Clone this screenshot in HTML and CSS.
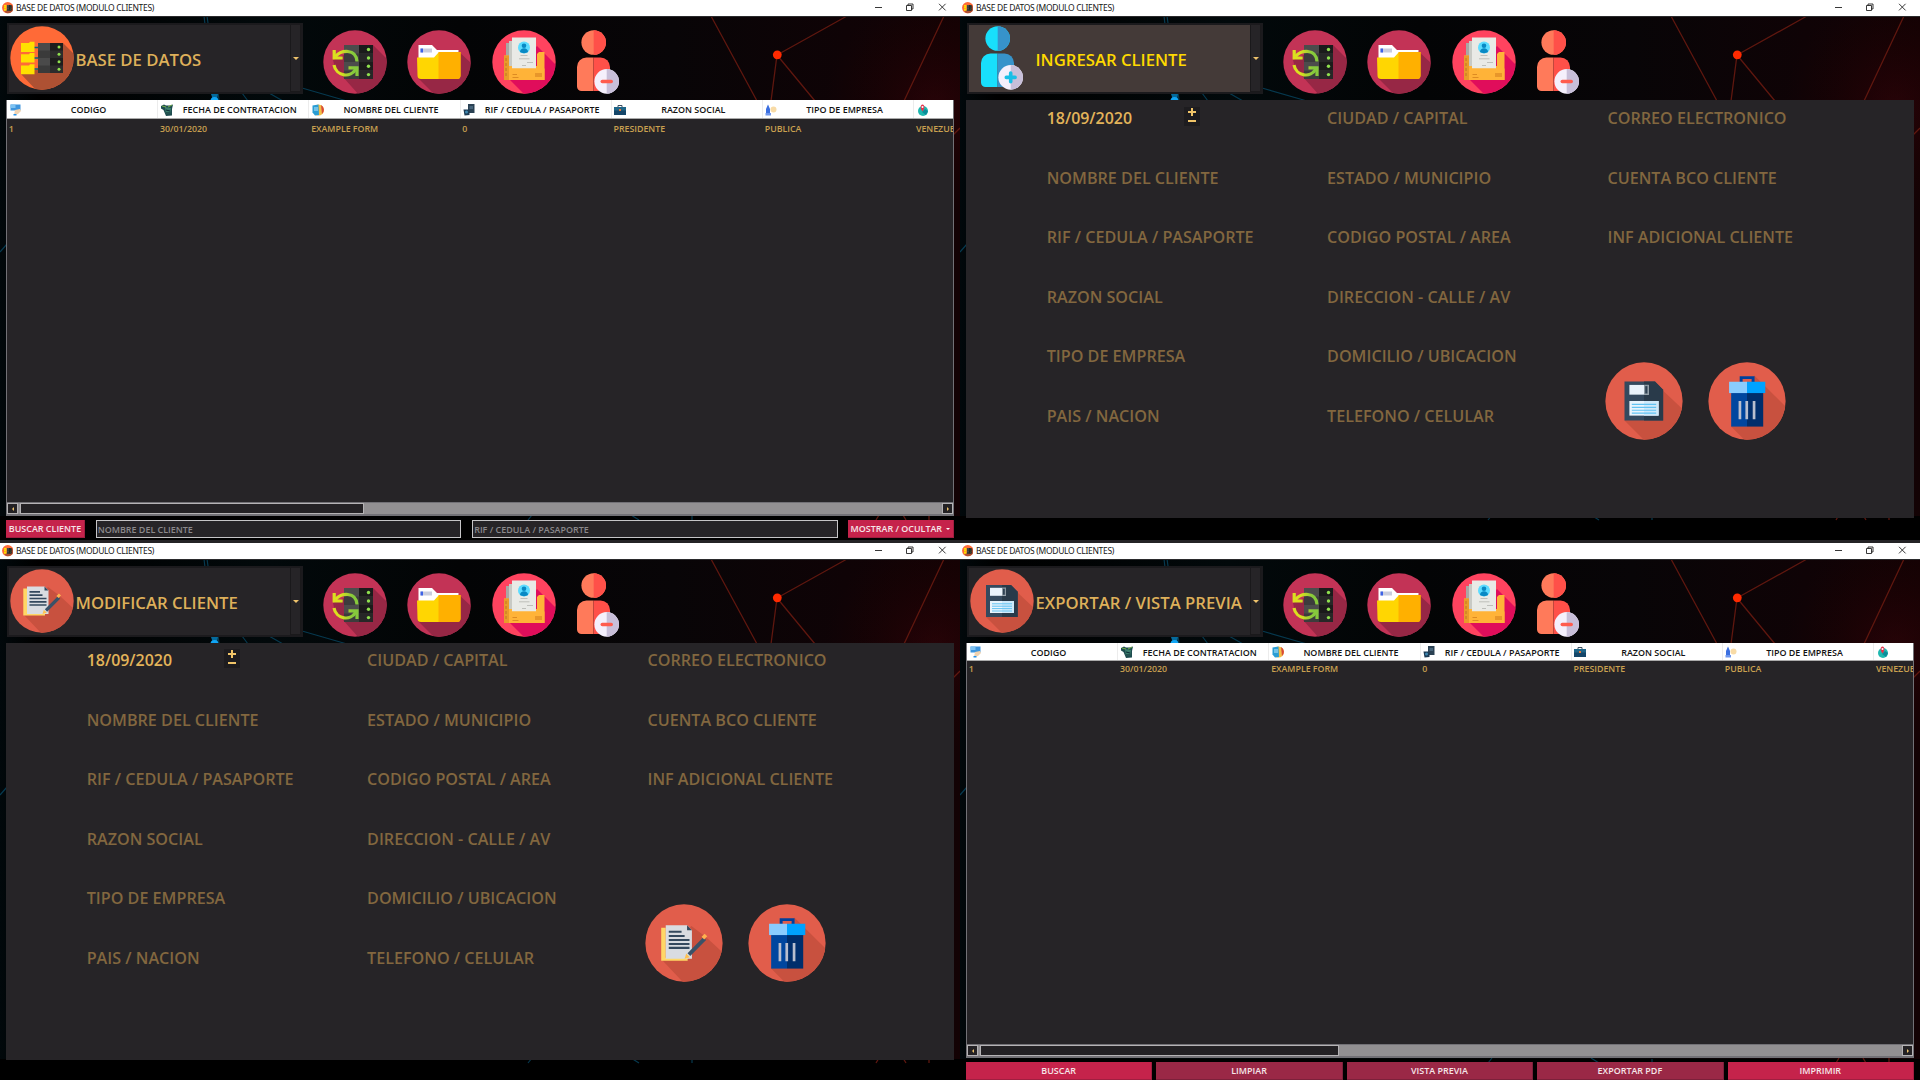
FILE: index.html
```html
<!DOCTYPE html>
<html lang="es">
<head>
<meta charset="utf-8">
<title>BASE DE DATOS (MODULO CLIENTES)</title>
<link rel="stylesheet" href="styles.css">
</head>
<body>
<svg class="defs" aria-hidden="true">
  <defs>
    <linearGradient id="glow" x1="0" x2="1" y1="0" y2="0"><stop offset="0" stop-color="#01080b"/><stop offset=".04" stop-color="#000"/><stop offset=".28" stop-color="#02090b"/><stop offset=".48" stop-color="#030405"/><stop offset=".7" stop-color="#080507"/><stop offset=".88" stop-color="#0f0306"/><stop offset="1" stop-color="#130204"/></linearGradient>
    <radialGradient id="ember" cx="935" cy="105" r="110" gradientUnits="userSpaceOnUse"><stop offset="0" stop-color="#34040a" stop-opacity=".6"/><stop offset="1" stop-color="#200" stop-opacity="0"/></radialGradient>
    <linearGradient id="arrows" x1="10" x2="36" y1="0" y2="0" gradientUnits="userSpaceOnUse"><stop offset=".3" stop-color="#dbe01f"/><stop offset=".75" stop-color="#86c93c"/></linearGradient>
    <clipPath id="disc"><circle cx="32" cy="32" r="31.7"/></clipPath>
  </defs>
  <symbol id="backdrop" viewBox="0 0 960 543">
    <rect width="960" height="543" fill="url(#glow)"/>
    <rect x="780" width="180" height="400" fill="url(#ember)"/>
    <rect y="516" width="960" height="27" fill="#000"/>
    <g fill="none" stroke="#06394f" stroke-width="1.2"><path d="M204 16l10 84M207 16l12 84M242 93l6 8M269 93l14 8M302 88l45 13M0 252l7-8M528 520l4-5M631 515l8 5M692 520v-4"/></g>
    <path d="M211 94l2 6h4l1-6z" fill="#046a9c"/><circle cx="214.5" cy="101" r="4" fill="#11a5f4"/>
    <g fill="none" stroke="#5f170f" stroke-width="1.3"><path d="M711 16l46 85M777 55l70-39M777 55l-6 46M777 55l38 46M944 16l-40 85M953 135l7-7M876 520l3-5M903 515l3 5M929 515v5"/></g>
    <circle cx="777.3" cy="54.8" r="4.4" fill="#ff2a00"/>
  </symbol>
  <symbol id="database" viewBox="0 0 64 64">
    <circle cx="32" cy="32" r="31.7" fill="#ff6a37"/>
    <path clip-path="url(#disc)" d="M11 48l18-5 24-26 12 12v36H27z" fill="#ae5133"/>
    <path d="M24 21.5h5M24 32h5M24 43h5" stroke="#05647f" stroke-width="1.5"/>
    <path d="M11 17h8l1-1.3h4.500V26H11zM11 28.300h8l1-1.300h4.500v9.600H11zM11 39.500h8l1-1.300h4.500v10H11z" fill="#ffe000"/>
    <path d="M28 17h25v30H28z" fill="#1d1d1d"/><path d="M28 17h12v30H28z" fill="#4a4a4a"/><path d="M28 24.500h12v7.500H28zM28 39.500h12V47H28z" fill="#3a3a3a"/><path d="M40 24.500h13v7.500H40zM40 39.500h13V47H40z" fill="#2c2c2c"/>
    <g fill="#8fe04f"><circle cx="49" cy="21" r="1.500"/><circle cx="49" cy="28.200" r="1.500"/><circle cx="49" cy="35.800" r="1.500"/><circle cx="49" cy="43.200" r="1.500"/></g>
  </symbol>
  <symbol id="sync" viewBox="0 0 64 64">
    <circle cx="32" cy="32" r="31.7" fill="#c33356"/>
    <path clip-path="url(#disc)" d="M10 30l11-5 29-10 15 15v35H36L12 38z" fill="#972745"/>
    <path d="M21 15h29v34H21z" fill="#3a3a3a"/><path d="M21 15h15v34H21z" fill="#4c4c4c"/><path d="M36 15h14v8.500H36zM36 32h14v8.500H36z" fill="#1b1b1b"/><path d="M21 23.500h15V32H21zM21 40.500h15V49H21z" fill="#3c3c3c"/><path d="M36 23.500h14V32H36zM36 40.500h14V49H36z" fill="#272727"/>
    <g fill="#8fe04f"><circle cx="45.500" cy="19.500" r="1.700"/><circle cx="45.500" cy="28" r="1.700"/><circle cx="45.500" cy="36.200" r="1.700"/><circle cx="45.500" cy="44.600" r="1.700"/></g>
    <g fill="none" stroke="url(#arrows)" stroke-width="3.200"><path d="M12.500 26.500C18 20 33 18 34 31.500"/><path d="M11.200 20v8h8.500"/><path d="M11 35c2 11 17 14 22 3.500"/><path d="M25.500 37.800H34V46"/></g>
  </symbol>
  <symbol id="folder" viewBox="0 0 64 64">
    <circle cx="32" cy="32" r="31.7" fill="#c33356"/>
    <path clip-path="url(#disc)" d="M11 48l40-27 14 13v31H28z" fill="#972745"/>
    <path d="M11.500 15H25l5 5h21.500v10h-40z" fill="#fff"/><path d="M13.500 18.500H25v4H13.500z" fill="#c9cddd"/><path d="M13.500 18.500h2.500v4h-2.500z" fill="#3d63e6"/>
    <path d="M10 27.500h17l5-5.500h21.500v23.500a3.500 3.500 0 0 1-3.500 3.500H14a3.500 3.500 0 0 1-3.500-3.500z" fill="#ffd602"/><path d="M31.500 22.500l.5-.5h21.500v23.500a3.500 3.500 0 0 1-3.500 3.500H31.500z" fill="#ffb000"/>
  </symbol>
  <symbol id="records" viewBox="0 0 64 64">
    <circle cx="32" cy="32" r="31.7" fill="#ff435f"/>
    <path clip-path="url(#disc)" d="M17 49L45 16l20 20v29H33z" fill="#e00d5b"/>
    <path d="M14 13h5v30h-5z" fill="#a8a8a5"/><path d="M17 11h6v30h-6z" fill="#c8cac5"/>
    <path d="M12 25.500h5V36h28V24l2-2h5.500v28H12z" fill="#ffb338"/><path d="M12 25.500h5V50h-5z" fill="#e99b2a"/><path d="M14 28v19" stroke="#bd7925" stroke-dasharray="3 2"/>
    <path d="M20 7.500h24V38.500H20z" fill="#e9eae6"/><path d="M17 38.500h35.500V50H17z" fill="#ffb338"/>
    <circle cx="32" cy="17.500" r="6" fill="#5cdcff"/><circle cx="32" cy="15.700" r="2.300" fill="#0889c4"/><path d="M28 22c0-5 8-5 8 0-2 1.500-6 1.500-8 0z" fill="#0889c4"/>
    <path d="M28.500 25.500h7M27 28.800h10.500M35 32.500h6M30 35.500h4" stroke="#bebfba" stroke-width="1"/><path d="M20.500 44.500h4.500M20.500 47.500h6" stroke="#dd8b22" stroke-width="1.200"/><path d="M43 43h7v4h-7z" fill="#e8962a"/>
  </symbol>
  <symbol id="user-remove" viewBox="0 0 42 64">
    <circle cx="16.700" cy="12.500" r="12.300" fill="#ff7a5a"/><path d="M16.700.2a12.300 12.300 0 0 1 0 24.600z" fill="#ff5049"/>
    <path d="M0 37a9.500 9.500 0 0 1 9.500-9.500h7V61H4.500A4.500 4.500 0 0 1 0 56.500z" fill="#ff7a5a"/><path d="M16.500 27.500h7A9.500 9.500 0 0 1 33 37v24H16.500z" fill="#ff5049"/>
    <circle cx="29.700" cy="51.400" r="12.300" fill="#f5f0fc"/><path d="M29.700 39.100a12.300 12.300 0 0 1 0 24.600z" fill="#c8bfd9"/><rect x="23.500" y="49.700" width="12.500" height="3.600" rx="1.800" fill="#ff5c4e"/>
  </symbol>
  <symbol id="user-add" viewBox="0 0 42 64">
    <circle cx="16.700" cy="12.500" r="12.300" fill="#18dffc"/><path d="M16.700.2a12.300 12.300 0 0 1 0 24.600z" fill="#3793ca"/>
    <path d="M0 37a9.500 9.500 0 0 1 9.500-9.500h7V61H4.500A4.500 4.500 0 0 1 0 56.500z" fill="#18dffc"/><path d="M16.500 27.500h7A9.500 9.500 0 0 1 33 37v24H16.500z" fill="#3793ca"/>
    <circle cx="29.700" cy="51.400" r="12.300" fill="#f5f0fc"/><path d="M29.700 39.100a12.300 12.300 0 0 1 0 24.600z" fill="#c8bfd9"/><path d="M29.700 47v8.800M25.300 51.400h8.800" stroke="#19bfe6" stroke-width="3.600" stroke-linecap="round"/>
  </symbol>
  <symbol id="notes" viewBox="0 0 64 64">
    <circle cx="32" cy="32" r="31.7" fill="#e15d4b"/>
    <path clip-path="url(#disc)" d="M14 46l24-28 12 9 15 14v24H32z" fill="#c8513f"/>
    <path d="M13.300 19.500H17V44h18v2.500H13.300z" fill="#ffd766"/><path d="M17 17.500h17.500l4 4V45H17z" fill="#d9dce1"/><path d="M34.500 17.500l4 4h-4z" fill="#34495e"/>
    <path d="M19.500 22.800h10.500M19.500 26.200h13M19.500 29.500h17M19.500 32.800h17M19.500 36h17" stroke="#34495e" stroke-width="1.700"/>
    <path d="M36 41.500l13-13" stroke="#3a5268" stroke-width="3.200"/><path d="M47.500 28l2.500-2.500" stroke="#ffb24f" stroke-width="3"/><path d="M32.500 45l1.300-4.300 3 3z" fill="#ffc04f"/>
  </symbol>
  <symbol id="save" viewBox="0 0 64 64">
    <circle cx="32" cy="32" r="31.7" fill="#e15d4b"/>
    <path clip-path="url(#disc)" d="M16 48l31-25 17 16v26H33z" fill="#c8513f"/>
    <path d="M16 16h25l6.700 6.700V48H16z" fill="#34495e"/><path d="M32 16h9l6.700 6.700V48H32z" fill="#293a4a"/>
    <path d="M20 18.800h16v8H20z" fill="#e9f2fb"/><path d="M32 18.800h4v8h-4z" fill="#8c99a3"/><path d="M33 19.800h1.800v6H33z" fill="#2e4153"/>
    <path d="M20 32h24v12H20z" fill="#e9f4fd"/><path d="M32 32h12v12H32z" fill="#cfe9fa"/><path d="M22 34.800h20M22 37.200h20M22 39.600h20M22 42h20" stroke="#62c3f3" stroke-width="1"/>
  </symbol>
  <symbol id="trash" viewBox="0 0 64 64">
    <circle cx="32" cy="32" r="31.7" fill="#e15d4b"/>
    <path clip-path="url(#disc)" d="M19 53L38 11l27 27v27H31z" fill="#c8513f"/>
    <path d="M27.200 17v-4.200H37V17" fill="none" stroke="#00409c" stroke-width="2.400"/>
    <path d="M19 25h13v28H19z" fill="#00469f"/><path d="M32 25h13.300v28H32z" fill="#002e6c"/><path d="M17.300 16.200H32v9.300H17.300z" fill="#8accff"/><path d="M32 16.200h15v9.300H32z" fill="#00a2ff"/>
    <path d="M26.200 32v15M31.800 32v15M37.800 32v15" stroke="#b9bfce" stroke-width="2.200"/>
  </symbol>
  <symbol id="h-code" viewBox="0 0 12 12"><path d="M.5.500h10v6h-10z" fill="#3e95dd"/><path d="M.5.500h5v3.500h-5z" fill="#7cc2f2"/><path d="M5 6l5-1 1 2-3 3-4 1z" fill="#f0d2b0"/><path d="M3.500 10h3v1.500h-3z" fill="#2590e8"/></symbol>
  <symbol id="h-date" viewBox="0 0 12 12"><path d="M0 2l3-1.500 2 1h4L12 .5 11 5v6.500l-6 .5-2.500-6L0 4.500z" fill="#1e4c4f"/><path d="M4 3l6 1-1 6H5z" fill="#3b7f6d"/><path d="M1 2l4 1M7 3l4-2" stroke="#73b04a"/><path d="M5 6l4 1M5 9h4" stroke="#0c2735"/></symbol>
  <symbol id="h-name" viewBox="0 0 12 12"><circle cx="6.500" cy="6" r="5.500" fill="#f2bf48"/><path d="M9 1a5.500 5.500 0 0 1 1 9z" fill="#d9493b"/><path d="M.5 1.500l6-1 .5 10.500-4 .5-2.500-3z" fill="#2a9dd4"/><path d="M2 4h4M2 6h4" stroke="#bce8fa"/></symbol>
  <symbol id="h-id" viewBox="0 0 12 12"><path d="M5 0h6.500v9H5z" fill="#2a4153"/><path d="M.5 5.500h6V11l-5 .5z" fill="#1b3a54"/><path d="M6.500 2h3.500v3H6.500z" fill="#47647a"/><circle cx="3.500" cy="8" r="1.500" fill="#3e86ae"/></symbol>
  <symbol id="h-social" viewBox="0 0 12 12"><path d="M4 3V1.500h4V3" fill="none" stroke="#3c4e5e"/><path d="M0 3h12v8H0z" fill="#154669"/><path d="M0 3h12v3.500H0z" fill="#1f6587"/><path d="M5 5h2v2H5z" fill="#e8793c"/></symbol>
  <symbol id="h-company" viewBox="0 0 12 12"><path d="M1 11V5L3 .5 5 5v6z" fill="#3b6fe0"/><path d="M.5 9H6v2.500H.5z" fill="#6f97ee"/><circle cx="8.500" cy="5.500" r="3" fill="#f8dba6"/></symbol>
  <symbol id="h-country" viewBox="0 0 12 12"><circle cx="6" cy="7" r="5" fill="#1fb8b0"/><path d="M5 8l4 3 2-4-3-2z" fill="#0b8c9a"/><path d="M5.500 7.500C3 4.500 3.200.5 5.500.5S8 4.500 5.500 7.500z" fill="#e5334d"/><circle cx="5.500" cy="3" r="1" fill="#fff"/></symbol>
  <symbol id="win-buttons" viewBox="0 0 80 16"><g fill="none" stroke="#222" stroke-width=".9"><path d="M3 7.500h7M34.500 5.500h5v5h-5zM36 5.500V4h5v5h-1.500M67 3.800l6.600 6.600M73.600 3.800L67 10.400"/></g></symbol>
</svg>

<main class="desktop">
  <section class="window">
    <svg class="backdrop"><use href="#backdrop"/></svg>
    <header class="titlebar"><svg class="app-icon"><use href="#database"/></svg><span class="caption">BASE DE DATOS (MODULO CLIENTES)</span><svg class="win-buttons"><use href="#win-buttons"/></svg></header>
    <nav class="toolbar">
      <div class="combo"><div class="combo-value"><svg class="disc"><use href="#database"/></svg><span>BASE DE DATOS</span></div><i class="combo-arrow"></i></div>
      <svg class="disc"><use href="#sync"/></svg><svg class="disc"><use href="#folder"/></svg><svg class="disc"><use href="#records"/></svg><svg class="person"><use href="#user-remove"/></svg>
    </nav>
    <div class="grid-view">
      <div class="columns">
        <div><svg><use href="#h-code"/></svg><b>CODIGO</b></div><div><svg><use href="#h-date"/></svg><b>FECHA DE CONTRATACION</b></div><div><svg><use href="#h-name"/></svg><b>NOMBRE DEL CLIENTE</b></div><div><svg><use href="#h-id"/></svg><b>RIF / CEDULA / PASAPORTE</b></div><div><svg><use href="#h-social"/></svg><b>RAZON SOCIAL</b></div><div><svg><use href="#h-company"/></svg><b>TIPO DE EMPRESA</b></div><div><svg><use href="#h-country"/></svg></div>
      </div>
      <div class="record"><span>1</span><span>30/01/2020</span><span>EXAMPLE FORM</span><span>0</span><span>PRESIDENTE</span><span>PUBLICA</span><span>VENEZUELA</span></div>
      <div class="scrollbar"><i class="step left"></i><i class="thumb"></i><i class="step right"></i></div>
    </div>
    <footer class="search-bar"><span class="button">BUSCAR CLIENTE</span><span class="field">NOMBRE DEL CLIENTE</span><span class="field">RIF / CEDULA / PASAPORTE</span><span class="button menu">MOSTRAR / OCULTAR</span></footer>
    <div class="status"></div>
  </section>

  <section class="window">
    <svg class="backdrop"><use href="#backdrop"/></svg>
    <header class="titlebar"><svg class="app-icon"><use href="#database"/></svg><span class="caption">BASE DE DATOS (MODULO CLIENTES)</span><svg class="win-buttons"><use href="#win-buttons"/></svg></header>
    <nav class="toolbar">
      <div class="combo active"><div class="combo-value"><svg class="disc"><use href="#user-add"/></svg><span>INGRESAR CLIENTE</span></div><i class="combo-arrow"></i></div>
      <svg class="disc"><use href="#sync"/></svg><svg class="disc"><use href="#folder"/></svg><svg class="disc"><use href="#records"/></svg><svg class="person"><use href="#user-remove"/></svg>
    </nav>
    <div class="form">
      <div class="form-col"><div class="date"><span>18/09/2020</span><span class="spinner"><i class="plus"></i><i class="minus"></i></span></div><span>NOMBRE DEL CLIENTE</span><span>RIF / CEDULA / PASAPORTE</span><span>RAZON SOCIAL</span><span>TIPO DE EMPRESA</span><span>PAIS / NACION</span></div>
      <div class="form-col"><span>CIUDAD / CAPITAL</span><span>ESTADO / MUNICIPIO</span><span>CODIGO POSTAL / AREA</span><span>DIRECCION - CALLE / AV</span><span>DOMICILIO / UBICACION</span><span>TELEFONO / CELULAR</span></div>
      <div class="form-col"><span>CORREO ELECTRONICO</span><span>CUENTA BCO CLIENTE</span><span>INF ADICIONAL CLIENTE</span><div class="actions"><svg><use href="#save"/></svg><svg><use href="#trash"/></svg></div></div>
    </div>
    <div class="status"></div>
  </section>

  <section class="window lower">
    <svg class="backdrop"><use href="#backdrop"/></svg>
    <header class="titlebar"><svg class="app-icon"><use href="#database"/></svg><span class="caption">BASE DE DATOS (MODULO CLIENTES)</span><svg class="win-buttons"><use href="#win-buttons"/></svg></header>
    <nav class="toolbar">
      <div class="combo"><div class="combo-value"><svg class="disc"><use href="#notes"/></svg><span>MODIFICAR CLIENTE</span></div><i class="combo-arrow"></i></div>
      <svg class="disc"><use href="#sync"/></svg><svg class="disc"><use href="#folder"/></svg><svg class="disc"><use href="#records"/></svg><svg class="person"><use href="#user-remove"/></svg>
    </nav>
    <div class="form">
      <div class="form-col"><div class="date"><span>18/09/2020</span><span class="spinner"><i class="plus"></i><i class="minus"></i></span></div><span>NOMBRE DEL CLIENTE</span><span>RIF / CEDULA / PASAPORTE</span><span>RAZON SOCIAL</span><span>TIPO DE EMPRESA</span><span>PAIS / NACION</span></div>
      <div class="form-col"><span>CIUDAD / CAPITAL</span><span>ESTADO / MUNICIPIO</span><span>CODIGO POSTAL / AREA</span><span>DIRECCION - CALLE / AV</span><span>DOMICILIO / UBICACION</span><span>TELEFONO / CELULAR</span></div>
      <div class="form-col"><span>CORREO ELECTRONICO</span><span>CUENTA BCO CLIENTE</span><span>INF ADICIONAL CLIENTE</span><div class="actions"><svg><use href="#notes"/></svg><svg><use href="#trash"/></svg></div></div>
    </div>
  </section>

  <section class="window lower">
    <svg class="backdrop"><use href="#backdrop"/></svg>
    <header class="titlebar"><svg class="app-icon"><use href="#database"/></svg><span class="caption">BASE DE DATOS (MODULO CLIENTES)</span><svg class="win-buttons"><use href="#win-buttons"/></svg></header>
    <nav class="toolbar">
      <div class="combo"><div class="combo-value"><svg class="disc"><use href="#save"/></svg><span>EXPORTAR / VISTA PREVIA</span></div><i class="combo-arrow"></i></div>
      <svg class="disc"><use href="#sync"/></svg><svg class="disc"><use href="#folder"/></svg><svg class="disc"><use href="#records"/></svg><svg class="person"><use href="#user-remove"/></svg>
    </nav>
    <div class="grid-view">
      <div class="columns">
        <div><svg><use href="#h-code"/></svg><b>CODIGO</b></div><div><svg><use href="#h-date"/></svg><b>FECHA DE CONTRATACION</b></div><div><svg><use href="#h-name"/></svg><b>NOMBRE DEL CLIENTE</b></div><div><svg><use href="#h-id"/></svg><b>RIF / CEDULA / PASAPORTE</b></div><div><svg><use href="#h-social"/></svg><b>RAZON SOCIAL</b></div><div><svg><use href="#h-company"/></svg><b>TIPO DE EMPRESA</b></div><div><svg><use href="#h-country"/></svg></div>
      </div>
      <div class="record"><span>1</span><span>30/01/2020</span><span>EXAMPLE FORM</span><span>0</span><span>PRESIDENTE</span><span>PUBLICA</span><span>VENEZUELA</span></div>
      <div class="scrollbar"><i class="step left"></i><i class="thumb wide"></i><i class="step right"></i></div>
    </div>
    <footer class="export-bar"><span class="button">BUSCAR</span><span class="button dim">LIMPIAR</span><span class="button dim">VISTA PREVIA</span><span class="button dim">EXPORTAR PDF</span><span class="button">IMPRIMIR</span></footer>
  </section>
</main>
</body>
</html>
```
FILE: styles.css
```css
* { box-sizing: border-box; }
body {
  margin: 0;
  overflow: hidden;
  background: #000;
  font: 600 8.95px/12px "Open Sans", "Noto Sans", sans-serif;
  white-space: nowrap;
}
svg { display: block; flex: none; }
.defs { position: absolute; width: 0; height: 0; }

.desktop {
  display: grid;
  grid-template: 543px 537px / 960px 960px;
  width: 1920px;
  height: 1080px;
}
.window {
  position: relative;
  isolation: isolate;
  display: flex;
  flex-direction: column;
  overflow: hidden;
}
.backdrop { position: absolute; inset: 0; z-index: -1; width: 960px; height: 543px; }

/* title bar */
.titlebar {
  display: flex;
  align-items: center;
  height: 17px;
  flex: none;
  padding: 0 8px 0 1.5px;
  background: #fff;
  border-bottom: 1px solid #2a2a2c;
}
.app-icon { width: 11.5px; height: 11.5px; }
.caption {
  flex: 1;
  margin-left: 3px;
  font: 400 8.5px/16px "Noto Sans", sans-serif;
  letter-spacing: -0.31px;
  color: #161616;
}
.win-buttons { width: 80px; height: 16px; }

/* toolbar */
.toolbar { display: flex; height: 83px; flex: none; padding: 6px 0 0 7px; }
.toolbar > .disc { margin: 7px 20.4px 0 0; }
.disc { width: 64px; height: 64px; }
.person { width: 42px; height: 64px; margin-top: 7px; margin-left: 1px; }
.combo {
  display: flex;
  width: 296px;
  height: 71px;
  margin-right: 20px;
  border: 2px solid #1b1a1d;
  background: #262427;
}
.combo-value {
  display: flex;
  align-items: center;
  width: 281px;
  padding: 0 0 2px 1px;
  color: #deb05a;
  font-size: 16.7px;
}
.combo-value span { padding: 4px 0 0 1.5px; }
.combo-arrow {
  display: flex;
  align-items: center;
  justify-content: center;
  width: 11px;
  border: solid #1a191b;
  border-width: 0 1px 1px;
}
.combo-arrow::before {
  content: "";
  border: 3px solid transparent;
  border-top-color: #edc26b;
  border-bottom: 0;
}
.active .combo-value { background: #443a38; color: #ffd900; }

/* client list */
.grid-view {
  display: flex;
  flex-direction: column;
  width: 948px;
  height: 416px;
  margin-left: 6px;
  border: 1px solid #727176;
  border-top: 0;
  background: #262427;
  overflow: hidden;
}
.columns, .record { display: grid; grid-template-columns: repeat(7, 151.2px); }
.columns { height: 19px; background: #fff; border-bottom: 1px solid #aaa; color: #111; }
.columns div { display: flex; align-items: center; padding: 1px 1.5px 0 2.5px; border-right: 1px solid #ececec; }
.columns svg { width: 12px; height: 12px; }
.columns b { flex: 1; padding-top: 1px; text-align: center; font-weight: 600; }
.record { height: 20px; align-items: center; font-size: 8.8px; color: #c9a050; }
.record span { padding-left: 1.8px; }
.lower .grid-view { height: 415px; }
.lower .columns { height: 18px; }
.lower .record { height: 15px; }

.scrollbar {
  display: flex;
  height: 13px;
  margin-top: auto;
  background: #929092;
  border: solid #727176;
  border-width: 1px 0;
}
.step, .thumb { border: 1px solid #b5b3b5; background: #232124; }
.step { display: flex; align-items: center; justify-content: center; width: 11px; }
.step::before { content: ""; border: 2.5px solid transparent; }
.left::before { border-left: 0; border-right-color: #edc26b; }
.right::before { border-right: 0; border-left-color: #edc26b; }
.thumb { width: 344px; margin: 0 auto 0 2px; }
.thumb.wide { width: 359px; }

/* buttons and search fields */
.button {
  display: flex;
  align-items: center;
  justify-content: center;
  padding-top: 1px;
  background: #c5234b;
  border: solid #a01e40;
  border-width: 0 1px 1px 0;
  color: #f6e6e9;
}
.dim { background: #9a2846; border-color: #7c203a; }
.search-bar {
  display: grid;
  grid-template-columns: 79px 365px 366px 106px;
  column-gap: 10.7px;
  height: 18px;
  margin: 4px 0 0 6px;
}
.field {
  display: flex;
  align-items: center;
  padding: 1px 0 0 1px;
  border: 1.5px solid #c6c5c7;
  background: #262427;
  color: #8b898c;
}
.search-bar > :nth-child(3) { margin: 0 -.5px 0 .8px; }
.search-bar > .menu { gap: 4px; margin-left: -.5px; }
.menu::after { content: ""; border: 2px solid transparent; border-top-color: #fff; border-bottom: 0; }
.export-bar {
  display: grid;
  grid-template-columns: repeat(5, 1fr);
  gap: 4px;
  height: 18px;
  margin: 4px 6px 0;
}
.status { height: 3px; margin-top: auto; background: #242326; }

/* client form */
.form {
  display: flex;
  width: 947.5px;
  height: 418px;
  margin-left: 6.2px;
  padding-left: 80.5px;
  background: #262427;
  font-size: 16.15px;
  color: #82673f;
}
.lower .form { height: 417px; }
.form-col { display: grid; grid-template-rows: repeat(6, 59.5px); width: 280.4px; }
.form-col > span, .date { height: 36px; line-height: 36px; }
.date { display: flex; align-items: center; font-size: 15.95px; color: #e3b45a; }
.spinner {
  display: flex;
  flex-direction: column;
  justify-content: space-around;
  align-items: center;
  width: 16px;
  height: 19px;
  margin: -3px 0 0 51.5px;
  background: #1d1c1f;
}
.plus, .minus { width: 8px; height: 8px; background: linear-gradient(#f0c468, #f0c468) center / 8px 2px no-repeat; }
.plus { background: linear-gradient(#f0c468, #f0c468) center / 8px 2px no-repeat, linear-gradient(#f0c468, #f0c468) center / 2px 8px no-repeat; }
.actions { display: flex; gap: 24.3px; margin: 83.5px 0 0 -2px; }
.actions svg { width: 78px; height: 78px; }
.lower .form-col { margin-top: -.8px; }
```
